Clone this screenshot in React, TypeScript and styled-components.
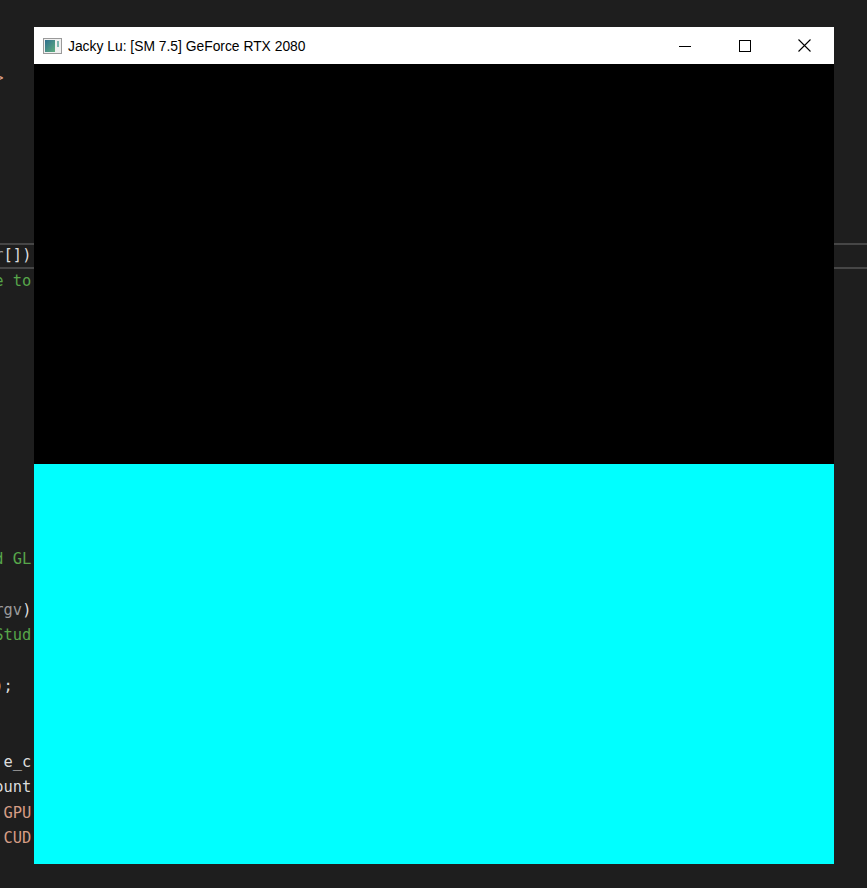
import React from "react";
import styled, { createGlobalStyle } from "styled-components";

const Global = createGlobalStyle`
  html, body {
    margin: 0;
    padding: 0;
    background: #1e1e1e;
    overflow: hidden;
  }
  #root {
    width: 867px;
    height: 888px;
  }
`;

const Desktop = styled.div`
  position: relative;
  width: 867px;
  height: 888px;
  overflow: hidden;
  background: #1e1e1e;
`;

const Editor = styled.div`
  display: flex;
  flex-direction: column;
  margin-left: -5.7px;
  padding-top: 15.15px;
  font-family: "DejaVu Sans Mono", "Liberation Mono", monospace;
  font-size: 15.4px;
  white-space: pre;
`;

const Line = styled.div<{ $current?: boolean }>`
  box-sizing: border-box;
  height: 25.35px;
  line-height: ${(p) => (p.$current ? "21.35px" : "25.35px")};
  border-top: ${(p) => (p.$current ? "2px solid #464646" : "none")};
  border-bottom: ${(p) => (p.$current ? "2px solid #464646" : "none")};
`;

const Tok = styled.span<{ $c: string }>`
  color: ${(p) => p.$c};
`;

const Win = styled.div`
  position: absolute;
  left: 34px;
  top: 27px;
  width: 800px;
  display: flex;
  flex-direction: column;
`;

const TitleBar = styled.div`
  height: 37px;
  background: #ffffff;
  display: flex;
  align-items: center;
`;

const AppIcon = styled.div`
  width: 20px;
  height: 20px;
  margin-left: 8px;
  display: flex;
  align-items: center;
  justify-content: center;
`;

const Title = styled.div`
  margin-left: 6px;
  flex: 1;
  font-family: "Liberation Sans", Arial, sans-serif;
  font-size: 13.85px;
  color: #000000;
  white-space: nowrap;
`;

const CaptionBtn = styled.div<{ $shift?: number }>`
  width: 58.5px;
  height: 37px;
  display: flex;
  align-items: center;
  justify-content: center;
  padding-right: ${(p) => p.$shift || 0}px;
  box-sizing: border-box;
`;

const Surface = styled.div`
  display: flex;
  flex-direction: column;
`;

const Half = styled.div<{ $bg: string }>`
  height: 400px;
  background: ${(p) => p.$bg};
`;

const C = {
  plain: "#dcdcdc",
  param: "#9a9a9a",
  comment: "#57a64a",
  str: "#d69d85",
};

type Seg = [string, string];
const lines: Record<number, Seg[]> = {
  2: [[">", C.str]],
  9: [["r", C.param], ["[])", C.plain]],
  10: [["e to", C.comment]],
  21: [["d GL", C.comment]],
  23: [["rgv", C.param], [")", C.plain]],
  24: [["Stud", C.comment]],
  26: [[");", C.plain]],
  29: [[" e_c", C.plain]],
  30: [["ount", C.plain]],
  31: [[" GPU", C.str]],
  32: [[" CUD", C.str]],
};

export default function App() {
  const rows = Array.from({ length: 36 }, (_, i) => i);
  return (
    <>
      <Global />
      <Desktop>
        <Editor>
          {rows.map((i) => (
            <Line key={i} $current={i === 9}>
              {(lines[i] || []).map(([t, c], j) => (
                <Tok key={j} $c={c}>
                  {t}
                </Tok>
              ))}
            </Line>
          ))}
        </Editor>
        <Win>
          <TitleBar>
            <AppIcon>
              <svg width="19" height="16" viewBox="0 0 19 16">
                <defs>
                  <linearGradient id="g" x1="0" y1="0" x2="1" y2="1">
                    <stop offset="0" stopColor="#2f6f8f" />
                    <stop offset="1" stopColor="#5fae7e" />
                  </linearGradient>
                </defs>
                <rect x="0.5" y="0.5" width="18" height="15" fill="#f0f0f0" stroke="#9a9a9a" />
                <rect x="2" y="2" width="10" height="12" fill="url(#g)" />
                <rect x="14" y="3" width="2" height="6" fill="#7fb8b0" />
              </svg>
            </AppIcon>
            <Title>Jacky Lu: [SM 7.5] GeForce RTX 2080</Title>
            <CaptionBtn $shift={5}>
              <svg width="12" height="12" viewBox="0 0 12 12">
                <line x1="0" y1="6.5" x2="12" y2="6.5" stroke="#000" strokeWidth="1" />
              </svg>
            </CaptionBtn>
            <CaptionBtn $shift={2}>
              <svg width="12" height="12" viewBox="0 0 12 12">
                <rect x="0.5" y="0.5" width="11" height="11" fill="none" stroke="#000" strokeWidth="1" />
              </svg>
            </CaptionBtn>
            <CaptionBtn>
              <svg width="13" height="13" viewBox="0 0 13 13">
                <path d="M0.5 0.5 L12.5 12.5 M12.5 0.5 L0.5 12.5" stroke="#000" strokeWidth="1.1" />
              </svg>
            </CaptionBtn>
          </TitleBar>
          <Surface>
            <Half $bg="#000000" />
            <Half $bg="#00ffff" />
          </Surface>
        </Win>
      </Desktop>
    </>
  );
}
